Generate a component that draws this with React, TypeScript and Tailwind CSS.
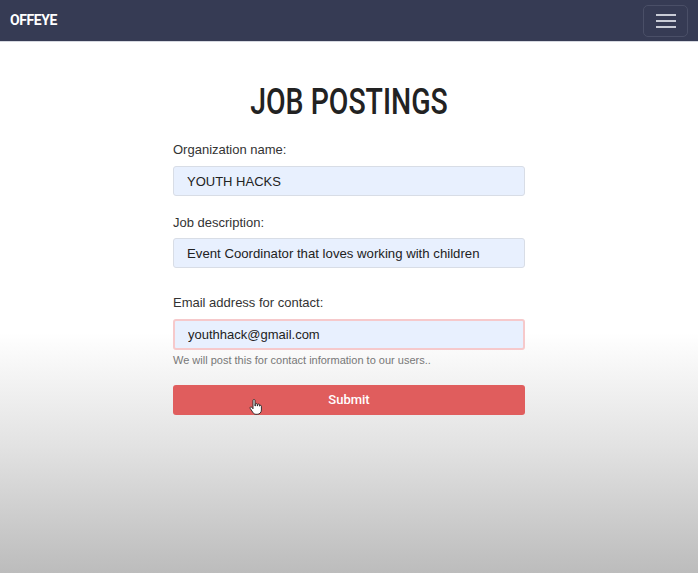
import { useState } from "react";

export default function App() {
  const [org, setOrg] = useState("YOUTH HACKS");
  const [desc, setDesc] = useState("Event Coordinator that loves working with children");
  const [email, setEmail] = useState("youthhack@gmail.com");

  return (
    <div
      className="min-h-[573px] flex flex-col bg-[linear-gradient(to_bottom,#ffffff_0%,#ffffff_58%,#e2e2e2_78%,#bcbcbc_100%)]"
      style={{ fontFamily: "'Liberation Sans', Arial, sans-serif" }}
    >
      {/* navbar */}
      <header className="h-[42px] bg-[#363b54] border-b border-[#d5d8e0] flex items-center justify-between pl-[10px] pr-[10px]">
        <span
          className="text-white font-bold text-[14px] tracking-[-0.4px]"
          style={{ fontFamily: "Roboto, sans-serif" }}
        >
          OFFEYE
        </span>
        <button className="w-[45px] h-[32px] rounded-[5px] border border-[#4a4f67] flex flex-col items-center justify-center gap-[4px]">
          <span className="block w-[20px] h-[2px] bg-[#c9ccd6]" />
          <span className="block w-[20px] h-[2px] bg-[#c9ccd6]" />
          <span className="block w-[20px] h-[2px] bg-[#c9ccd6]" />
        </button>
      </header>

      {/* form */}
      <main className="flex justify-center">
        <div className="w-[352px] pt-[40px]">
          <h1
            className="text-center text-[36px] leading-[40px] text-[#222] font-medium scale-x-[0.79]"
            style={{ fontFamily: "Roboto, sans-serif" }}
          >
            JOB POSTINGS
          </h1>

          <label className="block mt-[20px] text-[13px] leading-[16px] text-[#333]">Organization name:</label>
          <input
            value={org}
            onChange={(e) => setOrg(e.target.value)}
            className="mt-[8px] w-full h-[30px] px-[13px] rounded-[3px] bg-[#e8f0fe] border border-[#d8dde6] text-[13px] text-[#222] outline-none"
          />

          <label className="block mt-[19px] text-[13px] leading-[16px] text-[#333]">Job description:</label>
          <input
            value={desc}
            onChange={(e) => setDesc(e.target.value)}
            className="mt-[7px] w-full h-[30px] px-[13px] rounded-[3px] bg-[#e8f0fe] border border-[#d8dde6] text-[13.2px] text-[#222] outline-none"
          />

          <label className="block mt-[27px] text-[13px] leading-[16px] text-[#333]">Email address for contact:</label>
          <input
            value={email}
            onChange={(e) => setEmail(e.target.value)}
            className="mt-[8px] w-full h-[31px] px-[13px] rounded-[3px] bg-[#e8f0fe] border-2 border-[#f6c9cb] text-[13px] text-[#222] outline-none"
          />
          <p className="mt-[3px] text-[11px] leading-[14px] text-[#777]">We will post this for contact information to our users..</p>

          <div className="relative mt-[18px]">
            <button
              className="w-full h-[30px] rounded-[3px] bg-[#e05d5d] text-white text-[13px] font-medium"
              style={{ fontFamily: "Roboto, sans-serif" }}
            >
              Submit
            </button>
            {/* hand cursor */}
            <svg className="absolute left-[76px] top-[14px]" width="14" height="16" viewBox="0 0 14 16">
              <path
                d="M4 1.5c0-.6.4-1 1-1s1 .4 1 1V7h.3V5.5c0-.6.4-1 1-1s1 .4 1 1V7h.3V6c0-.6.4-1 1-1s1 .4 1 1v1.2c0-.5.4-.9.9-.9s.9.4.9.9V11c0 2.3-1.7 4.3-4.2 4.3H7c-1.4 0-2.4-.7-3.1-1.8L1.2 9.4c-.3-.5-.2-1 .3-1.3.4-.3 1-.2 1.3.2L4 9.8V1.5z"
                fill="#fff"
                stroke="#222"
                strokeWidth="0.9"
              />
            </svg>
          </div>
        </div>
      </main>
    </div>
  );
}
